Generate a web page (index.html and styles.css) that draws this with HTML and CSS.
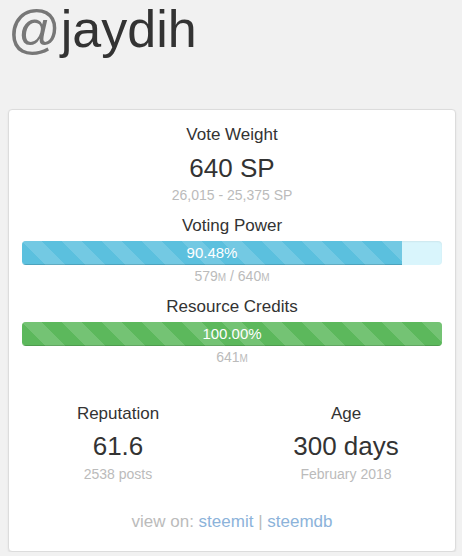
FILE: index.html
```html
<!DOCTYPE html>
<html>
<head>
<meta charset="utf-8">
<link rel="stylesheet" href="styles.css">
</head>
<body>
<h1 class="title"><span class="at">@</span>jaydih</h1>
<div class="card">
  <div class="label">Vote Weight</div>
  <div class="value">640 SP</div>
  <div class="sub sub-vw">26,015 - 25,375 SP</div>

  <div class="label label-gap">Voting Power</div>
  <div class="progress progress-info">
    <div class="bar bar-info" style="width: 90.48%">90.48%</div>
  </div>
  <div class="sub sub-bar">579<small>M</small> / 640<small>M</small></div>

  <div class="label label-gap">Resource Credits</div>
  <div class="progress progress-success">
    <div class="bar bar-success" style="width: 100%">100.00%</div>
  </div>
  <div class="sub sub-bar">641<small>M</small></div>

  <div class="stats">
    <div class="stat">
      <div class="label">Reputation</div>
      <div class="value value-stat">61.6</div>
      <div class="sub sub-stat">2538 posts</div>
    </div>
    <div class="stat">
      <div class="label">Age</div>
      <div class="value value-stat">300 days</div>
      <div class="sub sub-stat">February 2018</div>
    </div>
  </div>

  <div class="links">view on: <a href="#">steemit</a> | <a href="#">steemdb</a></div>
</div>
</body>
</html>
```

FILE: styles.css
```css
html, body {
  margin: 0;
  padding: 0;
}
body {
  background: #f1f1f1;
  font-family: "Liberation Sans", Arial, sans-serif;
  color: #333;
  padding: 0 6px 0 8px;
}
.title {
  font-size: 52px;
  line-height: 52px;
  font-weight: normal;
  margin: 3px 0 54px 0;
  color: #333;
}
.title .at {
  color: #777;
}
.card {
  background: #fff;
  border: 1px solid #dcdcdc;
  border-radius: 4px;
  box-shadow: 0 1px 2px rgba(0, 0, 0, 0.08);
  padding: 15px 13px 19px;
  text-align: center;
}
.label {
  font-size: 17px;
  line-height: 20px;
}
.label-gap {
  margin-top: 12px;
}
.value {
  font-size: 26px;
  line-height: 30px;
  margin-top: 8px;
}
.value-stat {
  margin-top: 7px;
}
.sub {
  font-size: 14px;
  line-height: 18px;
  color: #bbb;
}
.sub small {
  font-size: 10px;
  line-height: 1;
}
.sub-vw {
  margin-top: 3px;
}
.sub-bar {
  margin-top: 2px;
}
.sub-stat {
  margin-top: 4px;
}
.progress {
  margin-top: 5px;
  height: 24px;
  border-radius: 4px;
  overflow: hidden;
  text-align: left;
  box-shadow: inset 0 1px 2px rgba(0, 0, 0, 0.06);
}
.progress-info {
  background: #d9f5fc;
}
.progress-success {
  background: #dff0d8;
}
.bar {
  height: 24px;
  line-height: 24px;
  font-size: 15px;
  color: #fff;
  text-align: center;
  box-shadow: inset 0 -1px 0 rgba(0, 0, 0, 0.15);
  background-image: linear-gradient(45deg,
    rgba(255, 255, 255, 0.15) 25%, transparent 25%,
    transparent 50%, rgba(255, 255, 255, 0.15) 50%,
    rgba(255, 255, 255, 0.15) 75%, transparent 75%, transparent);
  background-size: 40px 40px;
}
.bar-info {
  background-color: #5bc0de;
}
.bar-success {
  background-color: #5cb85c;
}
.stats {
  display: grid;
  grid-template-columns: 1fr 1fr;
  margin: 38px -18px 0;
}
.links {
  margin-top: 29px;
  font-size: 17px;
  line-height: 20px;
  color: #bbb;
}
.links a {
  color: #8cb3da;
  text-decoration: none;
}
```
